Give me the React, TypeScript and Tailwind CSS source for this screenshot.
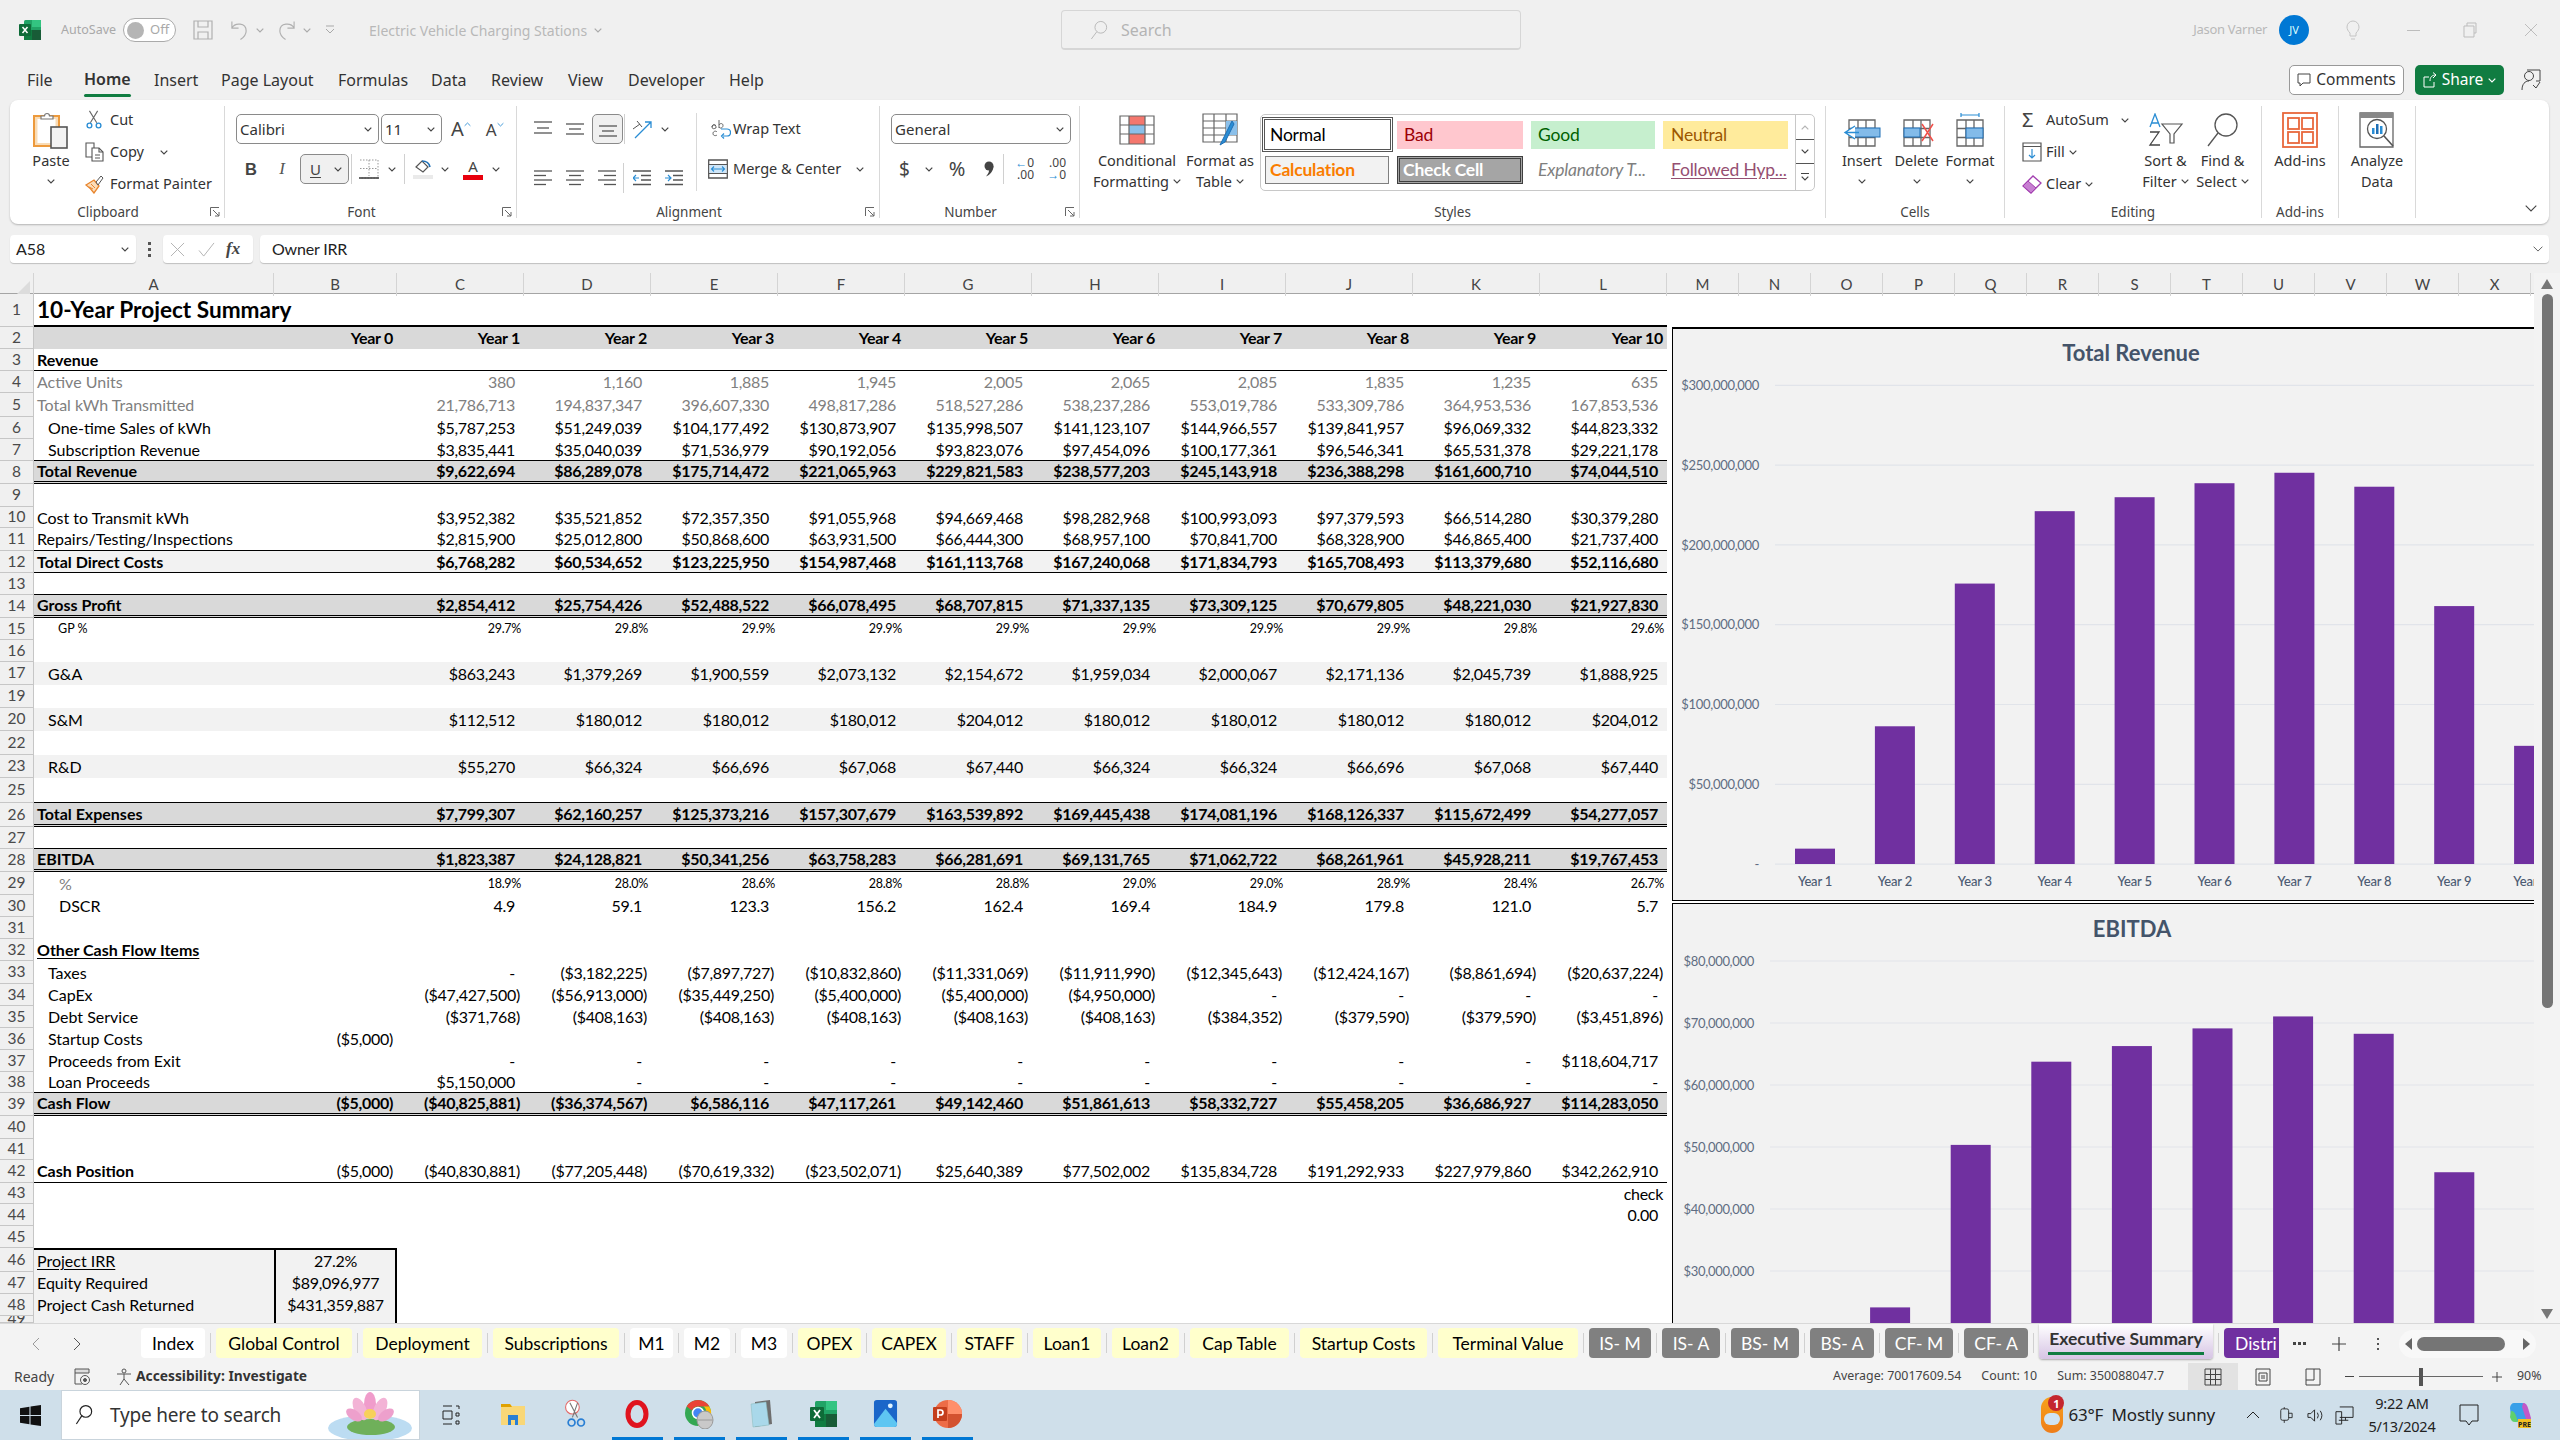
import type { ReactNode } from "react"

const chevron = (cls = "") => (
  <svg viewBox="0 0 8 5" className={`w-[8px] h-[5px] shrink-0 ${cls}`} fill="none" stroke="#444" strokeWidth="1.2">
    <path d="M.7.7 4 4 7.3.7" />
  </svg>
)

// ---- sheet data ----
type RowDef = { n: number; h: string; label?: string; pl?: string; vals?: string; cls?: string; txt?: string; lab?: string; small?: boolean; box?: boolean }

const ROWS: RowDef[] = [
  { n: 1, h: "h-[33px]", label: "10-Year Project Summary", lab: "font-bold text-[22.6px]", cls: "border-b-2 border-black" },
  { n: 2, h: "h-[22px]", vals: "Year_0 Year_1 Year_2 Year_3 Year_4 Year_5 Year_6 Year_7 Year_8 Year_9 Year_10", cls: "bg-[#d9d9d9] font-bold" },
  { n: 3, h: "h-[22px]", label: "Revenue", lab: "font-bold", cls: "border-b border-black" },
  { n: 4, h: "h-[22px]", label: "Active Units", vals: "_ 380 1,160 1,885 1,945 2,005 2,065 2,085 1,835 1,235 635", txt: "text-[#808080]" },
  { n: 5, h: "h-[24px]", label: "Total kWh Transmitted", vals: "_ 21,786,713 194,837,347 396,607,330 498,817,286 518,527,286 538,237,286 553,019,786 533,309,786 364,953,536 167,853,536", txt: "text-[#808080]" },
  { n: 6, h: "h-[22px]", label: "One-time Sales of kWh", pl: "pl-[14px]", vals: "_ $5,787,253 $51,249,039 $104,177,492 $130,873,907 $135,998,507 $141,123,107 $144,966,557 $139,841,957 $96,069,332 $44,823,332" },
  { n: 7, h: "h-[22px]", label: "Subscription Revenue", pl: "pl-[14px]", vals: "_ $3,835,441 $35,040,039 $71,536,979 $90,192,056 $93,823,076 $97,454,096 $100,177,361 $96,546,341 $65,531,378 $29,221,178", cls: "border-b border-black" },
  { n: 8, h: "h-[23px]", label: "Total Revenue", vals: "_ $9,622,694 $86,289,078 $175,714,472 $221,065,963 $229,821,583 $238,577,203 $245,143,918 $236,388,298 $161,600,710 $74,044,510", cls: "bg-[#d9d9d9] font-bold border-b-[3px] border-double border-black" },
  { n: 9, h: "h-[23px]" },
  { n: 10, h: "h-[21px]", label: "Cost to Transmit kWh", vals: "_ $3,952,382 $35,521,852 $72,357,350 $91,055,968 $94,669,468 $98,282,968 $100,993,093 $97,379,593 $66,514,280 $30,379,280" },
  { n: 11, h: "h-[23px]", label: "Repairs/Testing/Inspections", vals: "_ $2,815,900 $25,012,800 $50,868,600 $63,931,500 $66,444,300 $68,957,100 $70,841,700 $68,328,900 $46,865,400 $21,737,400", cls: "border-b border-black" },
  { n: 12, h: "h-[22px]", label: "Total Direct Costs", vals: "_ $6,768,282 $60,534,652 $123,225,950 $154,987,468 $161,113,768 $167,240,068 $171,834,793 $165,708,493 $113,379,680 $52,116,680", cls: "bg-[#f2f2f2] font-bold border-b border-black" },
  { n: 13, h: "h-[22px]", cls: "border-b border-black" },
  { n: 14, h: "h-[23px]", label: "Gross Profit", vals: "_ $2,854,412 $25,754,426 $52,488,522 $66,078,495 $68,707,815 $71,337,135 $73,309,125 $70,679,805 $48,221,030 $21,927,830", cls: "bg-[#d9d9d9] font-bold border-b-[3px] border-double border-black" },
  { n: 15, h: "h-[22px]", label: "GP %", pl: "pl-[24px]", lab: "text-[12.5px]", small: true, vals: "_ 29.7% 29.8% 29.9% 29.9% 29.9% 29.9% 29.9% 29.9% 29.8% 29.6%" },
  { n: 16, h: "h-[22px]" },
  { n: 17, h: "h-[23px]", label: "G&A", pl: "pl-[14px]", vals: "_ $863,243 $1,379,269 $1,900,559 $2,073,132 $2,154,672 $1,959,034 $2,000,067 $2,171,136 $2,045,739 $1,888,925", cls: "bg-[#f2f2f2]" },
  { n: 19, h: "h-[23px]" },
  { n: 20, h: "h-[23px]", label: "S&M", pl: "pl-[14px]", vals: "_ $112,512 $180,012 $180,012 $180,012 $204,012 $180,012 $180,012 $180,012 $180,012 $204,012", cls: "bg-[#f2f2f2]" },
  { n: 22, h: "h-[24px]" },
  { n: 23, h: "h-[23px]", label: "R&D", pl: "pl-[14px]", vals: "_ $55,270 $66,324 $66,696 $67,068 $67,440 $66,324 $66,324 $66,696 $67,068 $67,440", cls: "bg-[#f2f2f2]" },
  { n: 25, h: "h-[25px]", cls: "border-b border-black" },
  { n: 26, h: "h-[24px]", label: "Total Expenses", vals: "_ $7,799,307 $62,160,257 $125,373,216 $157,307,679 $163,539,892 $169,445,438 $174,081,196 $168,126,337 $115,672,499 $54,277,057", cls: "bg-[#d9d9d9] font-bold border-b-[3px] border-double border-black" },
  { n: 27, h: "h-[22px]", cls: "border-b border-black" },
  { n: 28, h: "h-[23px]", label: "EBITDA", vals: "_ $1,823,387 $24,128,821 $50,341,256 $63,758,283 $66,281,691 $69,131,765 $71,062,722 $68,261,961 $45,928,211 $19,767,453", cls: "bg-[#d9d9d9] font-bold border-b-[3px] border-double border-black" },
  { n: 29, h: "h-[23px]", label: "%", pl: "pl-[25px]", lab: "text-[#808080]", small: true, vals: "_ 18.9% 28.0% 28.6% 28.8% 28.8% 29.0% 29.0% 28.9% 28.4% 26.7%" },
  { n: 30, h: "h-[22px]", label: "DSCR", pl: "pl-[25px]", vals: "_ 4.9 59.1 123.3 156.2 162.4 169.4 184.9 179.8 121.0 5.7" },
  { n: 31, h: "h-[22px]" },
  { n: 32, h: "h-[22px]", label: "Other Cash Flow Items", lab: "font-bold underline underline-offset-2" },
  { n: 33, h: "h-[23px]", label: "Taxes", pl: "pl-[14px]", vals: "_ - ($3,182,225) ($7,897,727) ($10,832,860) ($11,331,069) ($11,911,990) ($12,345,643) ($12,424,167) ($8,861,694) ($20,637,224)" },
  { n: 34, h: "h-[22px]", label: "CapEx", pl: "pl-[14px]", vals: "_ ($47,427,500) ($56,913,000) ($35,449,250) ($5,400,000) ($5,400,000) ($4,950,000) - - - -" },
  { n: 35, h: "h-[22px]", label: "Debt Service", pl: "pl-[14px]", vals: "_ ($371,768) ($408,163) ($408,163) ($408,163) ($408,163) ($408,163) ($384,352) ($379,590) ($379,590) ($3,451,896)" },
  { n: 36, h: "h-[22px]", label: "Startup Costs", pl: "pl-[14px]", vals: "($5,000)" },
  { n: 37, h: "h-[22px]", label: "Proceeds from Exit", pl: "pl-[14px]", vals: "_ - - - - - - - - - $118,604,717" },
  { n: 38, h: "h-[21px]", label: "Loan Proceeds", pl: "pl-[14px]", vals: "_ $5,150,000 - - - - - - - - -", cls: "border-b border-black" },
  { n: 39, h: "h-[23px]", label: "Cash Flow", vals: "($5,000) ($40,825,881) ($36,374,567) $6,586,116 $47,117,261 $49,142,460 $51,861,613 $58,332,727 $55,458,205 $36,686,927 $114,283,050", cls: "bg-[#d9d9d9] font-bold border-b-[3px] border-double border-black" },
  { n: 40, h: "h-[23px]" },
  { n: 41, h: "h-[21px]" },
  { n: 42, h: "h-[23px]", label: "Cash Position", lab: "font-bold", vals: "($5,000) ($40,830,881) ($77,205,448) ($70,619,332) ($23,502,071) $25,640,389 $77,502,002 $135,834,728 $191,292,933 $227,979,860 $342,262,910", cls: "border-b border-black" },
  { n: 43, h: "h-[21px]", vals: "_ _ _ _ _ _ _ _ _ _ check" },
  { n: 44, h: "h-[22px]", vals: "_ _ _ _ _ _ _ _ _ _ 0.00" },
  { n: 45, h: "h-[22px]" },
  { n: 46, h: "h-[24px]", label: "Project IRR", lab: "underline underline-offset-2", vals: "27.2%", box: true },
  { n: 47, h: "h-[22px]", label: "Equity Required", vals: "$89,096,977", box: true },
  { n: 48, h: "h-[22px]", label: "Project Cash Returned", vals: "$431,359,887", box: true },
  { n: 49, h: "h-[7px]", box: true },
]

const COLS = ["A", "B", "C", "D", "E", "F", "G", "H", "I", "J", "K", "L", "M", "N", "O", "P", "Q", "R", "S", "T", "U", "V", "W", "X"]

function SheetRow({ r }: { r: RowDef }) {
  const vals = r.vals ? r.vals.split(" ") : []
  return (
    <div className={`flex ${r.h} overflow-hidden`}>
      <div className="w-[34px] shrink-0 bg-[#f0f0f0] border-r border-b border-[#c6c6c6] flex items-center justify-center text-[15.5px] leading-none text-[#4a4a4a]">{r.n}</div>
      <div className={`box-border grid grid-cols-[240px_123px_repeat(10,127px)] w-[1633px] h-full items-center text-[16px] leading-[18px] tracking-[-0.3px] ${r.cls ?? ""} ${r.txt ?? "text-black"}`}>
        <div className={`h-full flex items-center whitespace-nowrap tracking-normal ${r.pl ?? "pl-[3px]"} ${r.lab ?? ""} ${r.box ? "bg-[#f2f2f2]" : ""} ${r.n === 46 ? "border-t-2 border-black" : ""}`}>{r.label}</div>
        {r.box ? (
          <div className={`h-full bg-[#f2f2f2] border-x-2 border-black flex items-center justify-center ${r.n === 46 ? "border-t-2" : ""}`}>{vals[0]}</div>
        ) : (
          vals.map((v, i) => (
            <div
              key={i}
              className={`text-right whitespace-nowrap ${v.startsWith("(") || v.startsWith("Year") || v === "check" ? "pr-[4px]" : v.endsWith("%") ? "pr-[3px]" : "pr-[9px]"} ${r.small ? "text-[12.5px]" : ""}`}
            >
              {v.startsWith("_") ? "" : v.replace("_", " ")}
            </div>
          ))
        )}
      </div>
    </div>
  )
}

// ---- charts ----
const REV = [9.62, 86.29, 175.71, 221.07, 229.82, 238.58, 245.14, 236.39, 161.6, 74.04]
const EBITDA = [1.82, 24.13, 50.34, 63.76, 66.28, 69.13, 71.06, 68.26, 45.93, 19.77]

function RevenueChart() {
  const ticks = ["$300,000,000", "$250,000,000", "$200,000,000", "$150,000,000", "$100,000,000", "$50,000,000", "-"]
  return (
    <svg viewBox="0 0 861 571" className="w-[861px] h-[571px] block">
      <text x="458" y="32" textAnchor="middle" fontSize="22" fontWeight="700" fill="#44546a">Total Revenue</text>
      {ticks.map((t, i) => (
        <g key={t}>
          <line x1="102" x2="861" y1={56.3 + i * 79.8} y2={56.3 + i * 79.8} stroke="#e1e4ea" strokeWidth="1.2" />
          <text x="86" y={61 + i * 79.8} textAnchor="end" fontSize="13" letterSpacing="-0.3" fill="#5f6d82">{t}</text>
        </g>
      ))}
      {REV.map((v, i) => (
        <g key={i}>
          <rect x={122 + i * 79.9} y={535 - v * 1.596} width="40" height={v * 1.596} fill="#7030a0" />
          <text x={142 + i * 79.9} y="557" textAnchor="middle" fontSize="13" fontWeight="500" letterSpacing="-0.2" fill="#4c5b72">Year {i + 1}</text>
        </g>
      ))}
    </svg>
  )
}

function EbitdaChart() {
  const ticks = ["$80,000,000", "$70,000,000", "$60,000,000", "$50,000,000", "$40,000,000", "$30,000,000"]
  return (
    <svg viewBox="0 0 861 419" className="w-[861px] h-[419px] block">
      <text x="459" y="33" textAnchor="middle" fontSize="22" fontWeight="700" fill="#44546a">EBITDA</text>
      {ticks.map((t, i) => (
        <g key={t}>
          <line x1="97" x2="861" y1={57 + i * 62} y2={57 + i * 62} stroke="#e1e4ea" strokeWidth="1.2" />
          <text x="81" y={62 + i * 62} textAnchor="end" fontSize="13" letterSpacing="-0.3" fill="#5f6d82">{t}</text>
        </g>
      ))}
      {EBITDA.map((v, i) => (
        <rect key={i} x={116.5 + i * 80.6} y={57 + (80 - v) * 6.2} width="40" height={v * 6.2} fill="#7030a0" />
      ))}
    </svg>
  )
}

// ---- ribbon icons ----
function LineIcon({ lines }: { lines: number[][] }) {
  return (
    <svg viewBox="0 0 18 18" className="w-[18px] h-[18px]" stroke="#555" strokeWidth="1.3">
      {lines.map(([x1, x2, y], i) => (
        <line key={i} x1={x1} x2={x2} y1={y} y2={y} />
      ))}
    </svg>
  )
}

const ClipboardIcon = (
  <svg viewBox="0 0 36 38" className="w-[36px] h-[38px]">
    <rect x="1" y="5" width="25" height="30" fill="#f9dcb6" stroke="#ed9a3c" strokeWidth="2" />
    <rect x="4.5" y="8" width="18" height="24" fill="#fff" />
    <path d="M8 8V5h3.5a2.5 2.5 0 0 1 5 0H20v3z" fill="#fff" stroke="#777" strokeWidth="1.2" />
    <rect x="18" y="16" width="16" height="21" fill="#f3f3f3" stroke="#555" strokeWidth="1.6" />
  </svg>
)
const ScissorsIcon = (
  <svg viewBox="0 0 18 22" className="w-[18px] h-[20px]" fill="none">
    <path d="M4 1 12 14M13 1 5 14" stroke="#666" strokeWidth="1.2" />
    <circle cx="4" cy="17" r="2.6" stroke="#2a8dd4" strokeWidth="1.5" />
    <circle cx="14" cy="17" r="2.6" stroke="#2a8dd4" strokeWidth="1.5" />
  </svg>
)
const CopyIcon = (
  <svg viewBox="0 0 20 20" className="w-[20px] h-[20px]" fill="#fff" stroke="#555" strokeWidth="1.1">
    <path d="M1 1h8v14H1z" />
    <path d="M7 6h7l4 4v9H7z" />
    <path d="M14 6v4h4M10 13h5M10 16h5" fill="none" />
  </svg>
)
const PainterIcon = (
  <svg viewBox="0 0 20 20" className="w-[20px] h-[20px]" fill="none">
    <path d="M1 11 9 6l5 6-5 7C6 15 4 13 1 11z" fill="#fbdcb8" stroke="#e8842c" strokeWidth="1.3" />
    <path d="M4 13l4 2M6 10l4 4" stroke="#e8842c" />
    <path d="m11 8 5-6 2 2-5 7z" fill="#fff" stroke="#555" />
  </svg>
)

function CellsIcon({ kind }: { kind: "insert" | "delete" | "format" }) {
  return (
    <svg viewBox="0 0 38 34" className="w-[38px] h-[34px]" fill="none">
      {kind === "format" && <path d="M10 2h18M10 0v4M28 0v4" stroke="#2a8dd4" strokeWidth="1.2" />}
      <path d="M6 7h26v26H6zM6 15.500h26M6 24.500h26M15 7v26M23 7v26" stroke="#666" strokeWidth="1.3" />
      {kind === "insert" && (
        <>
          <rect x="10" y="15" width="27" height="9" fill="#83bbe9" stroke="#1f6fb5" />
          <path d="M12 13 2 19.500l10 6.500M2 19.500h14" stroke="#2a8dd4" strokeWidth="1.4" fill="#fff" />
        </>
      )}
      {kind === "delete" && (
        <>
          <rect x="6" y="15" width="16" height="9" fill="#83bbe9" stroke="#1f6fb5" />
          <path d="M24 11l11 17M35 11 24 28" stroke="#f0504a" strokeWidth="1.5" />
        </>
      )}
      {kind === "format" && <rect x="15" y="15" width="17" height="10" fill="#83bbe9" stroke="#1f6fb5" />}
    </svg>
  )
}

// a big ribbon button: icon on top, one or two lines of text, chevron
function BigBtn({ icon, lines, chev = true, w, lastChev = false }: { icon: ReactNode; lines: string[]; chev?: boolean; w: string; lastChev?: boolean }) {
  return (
    <div className={`${w} shrink-0 flex flex-col items-center`}>
      <div className="h-[40px] flex items-center justify-center">{icon}</div>
      {lines.map((l, i) => (
        <div key={l} className="h-[21px] leading-[21px] flex items-center gap-[4px] whitespace-nowrap">
          {l}
          {lastChev && i === lines.length - 1 && chevron()}
        </div>
      ))}
      {chev && !lastChev && <div className="h-[21px] flex items-center">{chevron()}</div>}
    </div>
  )
}

function Group({ w, label, launcher = true, children }: { w: string; label: string; launcher?: boolean; children: ReactNode }) {
  return (
    <div className={`${w} shrink-0 box-border h-[112px] my-[6px] border-r border-[#d9d9d9] flex flex-col justify-between`}>
      <div className="h-[92px]">{children}</div>
      <div className="flex items-center h-[20px] -mb-[4px] text-[13.5px] text-[#444]">
        <span className="flex-1 text-center">{label}</span>
        {launcher && (
          <svg viewBox="0 0 10 10" className="w-[10px] h-[10px] mr-[4px] ml-[4px]" fill="none" stroke="#666">
            <path d="M.5 9V.5H9M3 3l6 6M5 9h4V5" />
          </svg>
        )}
      </div>
    </div>
  )
}

const Sep = ({ h = "h-[30px]" }: { h?: string }) => <div className={`w-px ${h} bg-[#d0d0d0] shrink-0`} />

function Ribbon() {
  return (
    <div className="mx-[10px] h-[124px] w-[2539px] bg-white rounded-[8px] shadow-[0_1px_2px_rgba(0,0,0,0.25)] flex text-[14.5px] text-[#333] [font-family:'Noto_Sans',sans-serif]">
      <Group w="w-[215px]" label="Clipboard">
        <div className="flex pt-[4px] pl-[15px]">
          <BigBtn w="w-[52px]" icon={ClipboardIcon} lines={["Paste"]} />
          <div className="pl-[8px] -mt-[6px] flex flex-col">
            <div className="h-[32px] flex items-center"><span className="w-[25px]">{ScissorsIcon}</span>Cut</div>
            <div className="h-[32px] flex items-center"><span className="w-[25px]">{CopyIcon}</span>Copy<span className="ml-[16px]">{chevron()}</span></div>
            <div className="h-[32px] flex items-center"><span className="w-[25px]">{PainterIcon}</span>Format Painter</div>
          </div>
        </div>
      </Group>

      <Group w="w-[292px]" label="Font">
        <div className="pt-[8px] pl-[11px]">
          <div className="flex items-center h-[30px]">
            <div className="w-[143px] h-[30px] border border-[#8a8a8a] rounded-[5px] flex items-center justify-between px-[3px] pr-[6px] text-[15px]">Calibri{chevron()}</div>
            <div className="ml-[2px] w-[61px] h-[30px] border border-[#8a8a8a] rounded-[5px] flex items-center justify-between px-[3px] pr-[6px] text-[15px]">11{chevron()}</div>
            <span className="ml-[9px] text-[20px] text-[#444] leading-none">A</span>
            <svg viewBox="0 0 8 5" className="w-[7px] h-[5px] mb-[10px]" fill="none" stroke="#2a8dd4"><path d="M.7 4 4 .8 7.300 4" /></svg>
            <span className="ml-[15px] text-[17px] text-[#444] leading-none">A</span>
            <svg viewBox="0 0 8 5" className="w-[7px] h-[5px] mb-[10px]" fill="none" stroke="#2a8dd4"><path d="M.7 1 4 4.200 7.300 1" /></svg>
          </div>
          <div className="flex items-center h-[30px] mt-[10px]">
            <span className="w-[30px] text-center font-bold text-[16.5px] [font-family:'Liberation_Sans',sans-serif] text-[#444]">B</span>
            <span className="w-[32px] text-center italic text-[17px] [font-family:'Liberation_Serif',serif] text-[#555]">I</span>
            <div className="ml-[2px] w-[49px] h-[30px] rounded-[5px] border border-[#8a8a8a] bg-[#f0f0f0] flex items-center justify-between pl-[9px] pr-[6px]">
              <span className="text-[15px] underline underline-offset-2 text-[#444]">U</span>
              {chevron()}
            </div>
            <div className="ml-[2px]"><Sep /></div>
            <svg viewBox="0 0 20 20" className="w-[20px] h-[20px] ml-[7px]" fill="none">
              <path d="M1 1h18v18H1" stroke="#999" strokeDasharray="1.500 1.500" />
              <path d="M10 1v16M1 9.500h18" stroke="#999" strokeDasharray="1.500 1.500" />
              <path d="M0 19h20" stroke="#444" strokeWidth="1.600" />
            </svg>
            <span className="ml-[9px]">{chevron()}</span>
            <div className="ml-[8px]"><Sep /></div>
            <div className="ml-[8px] flex flex-col items-center w-[20px]">
              <svg viewBox="0 0 20 15" className="w-[20px] h-[15px]" fill="none">
                <path d="M3 8 9 2l6 6-5 5z" fill="#fff" stroke="#555" strokeWidth="1.200" />
                <path d="M9 2c4 0 7 1 8 6" stroke="#1f6fb5" strokeWidth="1.600" />
              </svg>
              <div className="w-[20px] h-[4px] bg-[#eaeaea] mt-[1px]" />
            </div>
            <span className="ml-[8px]">{chevron()}</span>
            <div className="ml-[14px] flex flex-col items-center w-[20px]">
              <span className="text-[15px] leading-[17px] text-[#444]">A</span>
              <div className="w-[20px] h-[5px] bg-[#e8000d]" />
            </div>
            <span className="ml-[9px]">{chevron()}</span>
          </div>
        </div>
      </Group>

      <Group w="w-[363px]" label="Alignment">
        <div className="flex h-full">
          <div className="w-[180px] box-border border-r border-[#d9d9d9] h-[78px] mt-[7px] pl-[10px] flex flex-col justify-between">
            <div className="flex items-center h-[30px] mt-[1px]">
              <span className="w-[32px] flex justify-center"><LineIcon lines={[[0, 18, 2], [3, 15, 8], [0, 18, 13]]} /></span>
              <span className="w-[32px] flex justify-center"><LineIcon lines={[[0, 18, 4], [3, 15, 9], [0, 18, 14]]} /></span>
              <span className="ml-[1px] w-[31px] h-[30px] bg-[#f0f0f0] border border-[#8a8a8a] rounded-[5px] flex items-center justify-center"><LineIcon lines={[[0, 18, 6], [3, 15, 11], [0, 18, 16]]} /></span>
              <span className="ml-[1px]"><Sep /></span>
              <svg viewBox="0 0 22 20" className="w-[22px] h-[20px] ml-[7px]" fill="none">
                <path d="M3 19 19 3M13 3h6v6" stroke="#2a8dd4" strokeWidth="1.300" />
                <path d="M1 10l7-5M5 2l5 6" stroke="#555" />
              </svg>
              <span className="ml-[7px]">{chevron()}</span>
            </div>
            <div className="flex items-center h-[30px] mb-[-2px]">
              <span className="w-[32px] flex justify-center"><LineIcon lines={[[0, 18, 2], [0, 12, 6.500], [0, 18, 11], [0, 12, 15.500]]} /></span>
              <span className="w-[32px] flex justify-center"><LineIcon lines={[[0, 18, 2], [3, 15, 6.500], [0, 18, 11], [3, 15, 15.500]]} /></span>
              <span className="w-[32px] flex justify-center"><LineIcon lines={[[0, 18, 2], [6, 18, 6.500], [0, 18, 11], [6, 18, 15.500]]} /></span>
              <Sep />
              <svg viewBox="0 0 18 18" className="w-[18px] h-[18px] ml-[9px]" fill="none">
                <path d="M0 2h18M8 6.500h10M8 11h10M0 15.500h18" stroke="#555" strokeWidth="1.300" />
                <path d="M6 9H0M3 6 0 9l3 3" stroke="#2a8dd4" strokeWidth="1.200" />
              </svg>
              <svg viewBox="0 0 18 18" className="w-[18px] h-[18px] ml-[14px]" fill="none">
                <path d="M0 2h18M8 6.500h10M8 11h10M0 15.500h18" stroke="#555" strokeWidth="1.300" />
                <path d="M0 9h6M3 6l3 3-3 3" stroke="#2a8dd4" strokeWidth="1.200" />
              </svg>
            </div>
          </div>
          <div className="pl-[14px] pt-[8px]">
            <div className="h-[30px] flex items-center gap-[2px]">
              <svg viewBox="0 0 20 20" className="w-[20px] h-[20px]" fill="none">
                <path d="M1 8c0-3 4-3 4 0v1M5 6.500C3.500 5.500 1 5.800 1 8s2.500 2 4 .8M8 1v8M8 6c1-2 4-2 4 .5S9 10 8 8M6 13c-1-1.500-4-1-4 1.500S5 17 6 16" stroke="#555" strokeWidth=".9" />
                <path d="M12 17h4a3.500 3.500 0 0 0 0-7h-6M13 14.500 10.500 17l2.500 2.500" stroke="#2a8dd4" strokeWidth="1.200" />
              </svg>
              Wrap Text
            </div>
            <div className="h-[30px] mt-[10px] flex items-center">
              <svg viewBox="0 0 20 20" className="w-[20px] h-[20px] -ml-[3px] mr-[5px]" fill="none">
                <path d="M.7 1h18.600v18H.7z" stroke="#555" strokeWidth="1.300" />
                <path d="M.7 5.500h18.600M.7 14.500h18.600" stroke="#555" />
                <rect x="1.500" y="6" width="17" height="8" fill="#cfe6f8" />
                <path d="M3 10h14M6 7.500 3.500 10 6 12.500M14 7.500l2.500 2.500-2.500 2.500" stroke="#2a8dd4" strokeWidth="1.100" />
              </svg>
              Merge &amp; Center
              <span className="ml-[15px]">{chevron()}</span>
            </div>
          </div>
        </div>
      </Group>

      <Group w="w-[200px]" label="Number">
        <div className="pt-[8px] pl-[11px]">
          <div className="w-[180px] h-[30px] border border-[#8a8a8a] rounded-[5px] flex items-center justify-between px-[3px] pr-[6px] text-[15px]">General{chevron()}</div>
          <div className="flex items-center h-[30px] mt-[10px]">
            <span className="w-[27px] text-center text-[19px] text-[#444]">$</span>
            <span className="ml-[7px]">{chevron()}</span>
            <span className="ml-[10px] w-[28px] text-center text-[20px] text-[#444]">%</span>
            <span className="ml-[4px] w-[28px] flex justify-center">
              <svg viewBox="0 0 10 16" className="w-[10px] h-[16px]" fill="#444">
                <circle cx="5" cy="5" r="4.500" />
                <path d="M9.500 5C9.500 10 6 14 2 15.500 4.500 12.500 5.500 10 5 8z" />
              </svg>
            </span>
            <Sep />
            <div className="ml-[6px] w-[24px] text-[12px] leading-[12px] text-[#444]">
              <div className="flex items-center justify-end"><span className="text-[#2a8dd4]">←</span>0</div>
              <div className="text-right">.00</div>
            </div>
            <div className="ml-[8px] w-[24px] text-[12px] leading-[12px] text-[#444]">
              <div className="text-right">.00</div>
              <div className="flex items-center justify-end"><span className="text-[#2a8dd4]">→</span>0</div>
            </div>
          </div>
        </div>
      </Group>

      <Group w="w-[746px]" label="Styles" launcher={false}>
        <div className="flex pt-[4px]">
          <BigBtn
            w="w-[88px] ml-[13px]"
            chev={false}
            lastChev
            icon={
              <svg viewBox="0 0 36 30" className="w-[36px] h-[30px]" fill="none">
                <rect x="10" y="1" width="16" height="9" fill="#f4776e" />
                <rect x="10" y="19" width="16" height="10" fill="#f4776e" />
                <rect x="10" y="10" width="16" height="9" fill="#8bc0ea" />
                <path d="M1 1h34v28H1zM1 10h34M1 19h34M10 1v28M26 1v28" stroke="#666" strokeWidth="1.200" />
              </svg>
            }
            lines={["Conditional", "Formatting"]}
          />
          <BigBtn
            w="w-[72px] ml-[3px]"
            chev={false}
            lastChev
            icon={
              <svg viewBox="0 0 36 34" className="w-[36px] h-[34px]" fill="none">
                <path d="M1 1h34v28H1zM1 8h34M1 15h34M1 22h34M12 1v28M24 1v28" stroke="#666" strokeWidth="1.200" />
                <path d="M24 8h11v14H24z" fill="#8bc0ea" />
                <path d="M30 8 21 26l-3 6 5-3 9-18z" fill="#2a8dd4" stroke="#1f6fb5" />
              </svg>
            }
            lines={["Format as", "Table"]}
          />
          <div className="ml-[4px] w-[555px] h-[77px] mt-[4px] border border-[#c8c8c8] rounded-[5px] flex text-[17.5px] leading-[20px] tracking-[-0.2px] [font-family:Lato,sans-serif]">
            <div className="flex-1 grid grid-cols-[135px_134px_132px_125px] grid-rows-[41px_1fr] pl-px">
              <div className="mt-[2px] w-[131px] h-[35px] border-[3px] border-double border-[#555] flex items-center pl-[5px] text-black">Normal</div>
              <div className="mt-[6px] w-[126px] h-[28px] bg-[#ffc7ce] text-[#9c0006] flex items-center pl-[7px]">Bad</div>
              <div className="mt-[6px] w-[124px] h-[28px] bg-[#c6efce] text-[#006100] flex items-center pl-[7px]">Good</div>
              <div className="mt-[6px] w-[125px] h-[28px] bg-[#ffeb9c] text-[#9c5700] flex items-center pl-[8px]">Neutral</div>
              <div className="ml-[3px] w-[124px] h-[28px] bg-[#f2f2f2] border border-[#7f7f7f] text-[#fa7d00] font-bold flex items-center pl-[4px]">Calculation</div>
              <div className="w-[126px] h-[28px] bg-[#a5a5a5] border-[3px] border-double border-[#3f3f3f] text-white font-bold flex items-center pl-[3px]">Check Cell</div>
              <div className="h-[28px] italic text-[#7f7f7f] flex items-center pl-[7px] whitespace-nowrap">Explanatory T...</div>
              <div className="h-[28px] flex items-center pl-[8px] text-[#954f72] underline underline-offset-2 whitespace-nowrap">Followed Hyp...</div>
            </div>
            <div className="w-[19px] flex flex-col border-l border-[#c8c8c8] items-center">
              <div className="h-[24px] flex items-center">{chevron("rotate-180 opacity-40")}</div>
              <div className="h-[25px] w-full border-y border-[#555] flex items-center justify-center">{chevron()}</div>
              <div className="flex-1 flex flex-col items-center justify-center gap-[2px]"><div className="w-[8px] h-px bg-[#444]" />{chevron()}</div>
            </div>
          </div>
        </div>
      </Group>

      <Group w="w-[179px]" label="Cells" launcher={false}>
        <div className="flex pt-[4px] pl-[9px]">
          <BigBtn w="w-[54px]" icon={<CellsIcon kind="insert" />} lines={["Insert"]} />
          <BigBtn w="w-[55px]" icon={<CellsIcon kind="delete" />} lines={["Delete"]} />
          <BigBtn w="w-[52px]" icon={<CellsIcon kind="format" />} lines={["Format"]} />
        </div>
      </Group>

      <Group w="w-[257px]" label="Editing" launcher={false}>
        <div className="flex">
          <div className="w-[132px] shrink-0 pl-[17px] -mt-[2px] flex flex-col">
            <div className="h-[32px] flex items-center">
              <span className="w-[24px] text-[20px] text-[#444] leading-none">Σ</span>AutoSum<span className="ml-[12px]">{chevron()}</span>
            </div>
            <div className="h-[32px] flex items-center">
              <span className="w-[24px]">
                <svg viewBox="0 0 20 20" className="w-[20px] h-[20px]" fill="none">
                  <path d="M1 1h18v18H1zM1 4.500h18" stroke="#555" strokeWidth="1.200" />
                  <path d="M10 7v9M7 13l3 3 3-3" stroke="#2a8dd4" strokeWidth="1.200" />
                </svg>
              </span>
              Fill<span className="ml-[4px]">{chevron()}</span>
            </div>
            <div className="h-[32px] flex items-center">
              <span className="w-[24px]">
                <svg viewBox="0 0 20 20" className="w-[20px] h-[20px]" fill="none">
                  <path d="M1 12 11 2l8 7-10 10z" fill="#fff" stroke="#a33fb0" strokeWidth="1.300" />
                  <path d="M1 12l5-5 8 7-5 5z" fill="#c77fd2" stroke="#a33fb0" />
                </svg>
              </span>
              Clear<span className="ml-[4px]">{chevron()}</span>
            </div>
          </div>
          <div className="flex pt-[4px]">
            <BigBtn
              w="w-[57px]"
              chev={false}
              lastChev
              icon={
                <svg viewBox="0 0 36 34" className="w-[36px] h-[34px]" fill="none">
                  <path d="M2 14 7 1l5 13M4 10h6" stroke="#2a8dd4" strokeWidth="1.300" />
                  <path d="M2 19h9L2 32h10" stroke="#444" strokeWidth="1.300" />
                  <path d="M14 11h20l-8 10v9h-4v-9z" stroke="#555" strokeWidth="1.200" />
                </svg>
              }
              lines={["Sort &", "Filter"]}
            />
            <BigBtn
              w="w-[57px]"
              chev={false}
              lastChev
              icon={
                <svg viewBox="0 0 34 36" className="w-[34px] h-[36px]" fill="none">
                  <circle cx="20" cy="13" r="11" stroke="#555" strokeWidth="1.300" />
                  <path d="M12 21 2 34" stroke="#555" strokeWidth="1.300" />
                </svg>
              }
              lines={["Find &", "Select"]}
            />
          </div>
        </div>
      </Group>

      <Group w="w-[77px]" label="Add-ins" launcher={false}>
        <div className="flex pt-[4px] justify-center">
          <BigBtn
            w="w-[70px]"
            chev={false}
            icon={
              <svg viewBox="0 0 36 36" className="w-[36px] h-[36px]" fill="none" stroke="#e8683c" strokeWidth="1.800">
                <rect x="1" y="1" width="34" height="34" />
                <rect x="6" y="6" width="11" height="11" />
                <rect x="20" y="6" width="11" height="11" />
                <rect x="6" y="20" width="11" height="11" />
                <rect x="20" y="20" width="11" height="11" />
              </svg>
            }
            lines={["Add-ins"]}
          />
        </div>
      </Group>

      <Group w="w-[77px]" label="" launcher={false}>
        <div className="flex pt-[4px] justify-center">
          <BigBtn
            w="w-[70px]"
            chev={false}
            icon={
              <svg viewBox="0 0 36 36" className="w-[36px] h-[36px]" fill="none">
                <path d="M1 1h33v34H1z" stroke="#666" strokeWidth="1.300" />
                <rect x="1" y="1" width="33" height="5" fill="#888" />
                <circle cx="18" cy="17" r="9.500" fill="#fff" stroke="#555" strokeWidth="1.300" />
                <rect x="13" y="16" width="2.500" height="6" fill="#2a8dd4" />
                <rect x="17" y="12" width="2.500" height="10" fill="#1f6fb5" />
                <rect x="21" y="14" width="2.500" height="8" fill="#2a8dd4" />
                <path d="m25 24 9 10" stroke="#555" strokeWidth="1.600" />
              </svg>
            }
            lines={["Analyze", "Data"]}
          />
        </div>
      </Group>

      <div className="flex-1 flex items-end justify-end pr-[12px] pb-[12px]">
        <svg viewBox="0 0 12 7" className="w-[12px] h-[7px]" fill="none" stroke="#444" strokeWidth="1.100"><path d="M.7.7 6 6l5.300-5.300" /></svg>
      </div>
    </div>
  )
}

// ---- tabs ----
const TABS: { label: string; w: string; c: string }[] = [
  { label: "Index", w: "w-[64px]", c: "bg-white text-black" },
  { label: "Global Control", w: "w-[136px]", c: "bg-[#ffffcc] text-black" },
  { label: "Deployment", w: "w-[119px]", c: "bg-[#ffffcc] text-black" },
  { label: "Subscriptions", w: "w-[126px]", c: "bg-[#ffffcc] text-black" },
  { label: "M1", w: "w-[43px]", c: "bg-white text-black" },
  { label: "M2", w: "w-[46px]", c: "bg-white text-black" },
  { label: "M3", w: "w-[46px]", c: "bg-white text-black" },
  { label: "OPEX", w: "w-[63px]", c: "bg-[#ffffcc] text-black" },
  { label: "CAPEX", w: "w-[74px]", c: "bg-[#ffffcc] text-black" },
  { label: "STAFF", w: "w-[65px]", c: "bg-[#ffffcc] text-black" },
  { label: "Loan1", w: "w-[68px]", c: "bg-[#ffffcc] text-black" },
  { label: "Loan2", w: "w-[67px]", c: "bg-[#ffffcc] text-black" },
  { label: "Cap Table", w: "w-[99px]", c: "bg-[#ffffcc] text-black" },
  { label: "Startup Costs", w: "w-[127px]", c: "bg-[#ffffcc] text-black" },
  { label: "Terminal Value", w: "w-[140px]", c: "bg-[#ffffcc] text-black" },
  { label: "IS- M", w: "w-[62px]", c: "bg-[#808080] text-white" },
  { label: "IS- A", w: "w-[58px]", c: "bg-[#808080] text-white" },
  { label: "BS- M", w: "w-[68px]", c: "bg-[#808080] text-white" },
  { label: "BS- A", w: "w-[64px]", c: "bg-[#808080] text-white" },
  { label: "CF- M", w: "w-[68px]", c: "bg-[#808080] text-white" },
  { label: "CF- A", w: "w-[64px]", c: "bg-[#808080] text-white" },
]

function TabBar() {
  return (
    <div className="h-[40px] bg-[#f3f3f3] border-t border-[#d8d8d8] flex items-start text-[17.5px] leading-[22px]">
      <div className="w-[141px] h-full shrink-0 flex items-center text-[#777]">
        <svg viewBox="0 0 8 14" className="w-[8px] h-[14px] ml-[32px]" fill="none" stroke="#999"><path d="M7 1 1 7l6 6" /></svg>
        <svg viewBox="0 0 8 14" className="w-[8px] h-[14px] ml-[33px]" fill="none" stroke="#555"><path d="m1 1 6 6-6 6" /></svg>
      </div>
      <div className="flex items-start pt-[4px]">
        {TABS.map((t) => (
          <div key={t.label} className="flex items-center">
            <div className={`${t.w} h-[30px] pt-[2px] rounded-[4px] flex items-center justify-center whitespace-nowrap ${t.c}`}>{t.label}</div>
            <div className="w-[11px] flex justify-center"><div className="w-px h-[20px] bg-[#d0d0d0]" /></div>
          </div>
        ))}
        <div className="w-[174px] h-[35px] -mt-[4px] rounded-b-[4px] bg-gradient-to-b from-white to-[#d6c4e4] shadow-[0_1px_2px_rgba(0,0,0,0.3)] flex flex-col items-center text-[#333] font-bold">
          <div className="h-[28px] pt-[2px] flex items-center whitespace-nowrap">Executive Summary</div>
          <div className="w-[156px] h-[3px] bg-[#107c41]" />
        </div>
        <div className="w-[11px] flex justify-center"><div className="w-px h-[20px] bg-[#d0d0d0] mt-[5px]" /></div>
        <div className="w-[55px] h-[30px] pt-[2px] rounded-l-[4px] bg-[#7030a0] text-white flex items-center pl-[11px] overflow-hidden">Distri</div>
      </div>
      <div className="flex items-center h-full text-[#444]">
        <div className="ml-[14px] flex gap-[2px]">
          <div className="w-[3px] h-[3px] bg-[#444]" /><div className="w-[3px] h-[3px] bg-[#444]" /><div className="w-[3px] h-[3px] bg-[#444]" />
        </div>
        <svg viewBox="0 0 14 14" className="w-[14px] h-[14px] ml-[26px]" stroke="#444" strokeWidth="1.200"><path d="M7 0v14M0 7h14" /></svg>
        <div className="ml-[31px] flex flex-col gap-[3px]">
          <div className="w-[2px] h-[2px] bg-[#555]" /><div className="w-[2px] h-[2px] bg-[#555]" /><div className="w-[2px] h-[2px] bg-[#555]" />
        </div>
        <div className="ml-[20px] w-[137px] h-[28px] bg-[#f8f8f8] rounded-full flex items-center px-[6px] gap-[5px]">
          <svg viewBox="0 0 7 12" className="w-[7px] h-[12px]" fill="#666"><path d="M7 0 0 6l7 6z" /></svg>
          <div className="w-[88px] h-[14px] rounded-full bg-[#757575]" />
          <div className="flex-1" />
          <svg viewBox="0 0 7 12" className="w-[7px] h-[12px]" fill="#666"><path d="m0 0 7 6-7 6z" /></svg>
        </div>
      </div>
    </div>
  )
}

function StatusBar() {
  return (
    <div className="h-[27px] bg-[#f3f3f3] flex items-center text-[12.4px] text-[#444] [font-family:'Noto_Sans',sans-serif]">
      <span className="ml-[14px] w-[60px] text-[14px]">Ready</span>
      <svg viewBox="0 0 18 18" className="w-[18px] h-[18px]" fill="none" stroke="#555">
        <path d="M1 1h14v4H1z" fill="#ddd" />
        <path d="M1 5v11h7" />
        <circle cx="11" cy="12" r="4.500" />
        <circle cx="11" cy="12" r="1.500" fill="#555" />
      </svg>
      <svg viewBox="0 0 18 18" className="w-[18px] h-[18px] ml-[23px]" fill="none" stroke="#555">
        <circle cx="9" cy="3" r="2" />
        <path d="M2 6h14M9 6v5M9 11l-4 6M9 11l5 6" />
      </svg>
      <span className="ml-[3px] font-bold text-[#333] text-[13.8px]">Accessibility: Investigate</span>
      <div className="ml-auto flex items-center h-full">
        <span>Average: 70017609.54</span>
        <span className="ml-[20px]">Count: 10</span>
        <span className="ml-[20px]">Sum: 350088047.7</span>
        <div className="ml-[24px] w-[50px] h-full bg-[#e2e2e2] flex items-center justify-center">
          <svg viewBox="0 0 18 18" className="w-[18px] h-[18px]" fill="none" stroke="#444">
            <path d="M1 1h16v16H1zM1 6.500h16M1 11.500h16M6.500 1v16M11.500 1v16" />
          </svg>
        </div>
        <svg viewBox="0 0 18 18" className="w-[18px] h-[18px] ml-[16px]" fill="none" stroke="#444">
          <path d="M2 1h14v16H2zM5 5h8v8H5zM7 8h4M7 10h4" />
        </svg>
        <svg viewBox="0 0 18 18" className="w-[18px] h-[18px] ml-[32px]" fill="none" stroke="#444">
          <path d="M2 1h14v16H2zM2 12h8V1" />
        </svg>
        <span className="ml-[23px] w-[9px] h-px bg-[#444]" />
        <div className="ml-[5px] w-[124px] h-px bg-[#666] flex items-center justify-center">
          <div className="w-[4px] h-[18px] bg-[#555]" />
        </div>
        <svg viewBox="0 0 10 10" className="w-[10px] h-[10px] ml-[9px]" stroke="#444"><path d="M5 0v10M0 5h10" /></svg>
        <span className="ml-[15px] w-[26px] mr-[17px]">90%</span>
      </div>
    </div>
  )
}

function TaskApp({ on = false, children }: { on?: boolean; children: ReactNode }) {
  return (
    <div className="w-[62px] h-full flex flex-col items-center">
      <div className="flex-1 flex items-center justify-center">{children}</div>
      <div className={`w-[51px] h-[3px] ${on ? "bg-[#0078d4]" : ""}`} />
    </div>
  )
}

function Taskbar() {
  return (
    <div className="h-[50px] bg-[#cfdfea] flex items-center text-black [font-family:'Noto_Sans',sans-serif]">
      <div className="w-[61px] flex justify-center">
        <svg viewBox="0 0 20 20" className="w-[21px] h-[21px]" fill="#111">
          <path d="M0 3 9 1.700V9.500H0zM10 1.500 20 0v9.500H10zM0 10.500h9v7.800L0 17zM10 10.500h10V20l-10-1.500z" />
        </svg>
      </div>
      <div className="w-[359px] h-full bg-white border border-[#c9d4dc] flex items-center overflow-hidden">
        <svg viewBox="0 0 20 24" className="w-[18px] h-[22px] ml-[13px]" fill="none" stroke="#222" strokeWidth="1.300">
          <circle cx="12" cy="8" r="6.500" />
          <path d="M7.500 13 1.500 22" />
        </svg>
        <span className="ml-[17px] text-[19px] text-[#333] tracking-[-0.2px]">Type here to search</span>
        <svg viewBox="0 0 86 50" className="w-[86px] h-[50px] ml-[46px] shrink-0">
          <ellipse cx="43" cy="38" rx="42" ry="13" fill="#bcdcf2" />
          <ellipse cx="44" cy="37" rx="24" ry="8" fill="#6fb05a" />
          <ellipse cx="43" cy="14" rx="6" ry="12" fill="#f09ccb" />
          <ellipse cx="33" cy="19" rx="6" ry="12" fill="#f3b3d6" transform="rotate(-25 33 19)" />
          <ellipse cx="53" cy="19" rx="6" ry="12" fill="#f3b3d6" transform="rotate(25 53 19)" />
          <ellipse cx="27" cy="25" rx="5" ry="9" fill="#eda0cc" transform="rotate(-55 27 25)" />
          <ellipse cx="59" cy="25" rx="5" ry="9" fill="#eda0cc" transform="rotate(55 59 25)" />
          <ellipse cx="43" cy="24" rx="6" ry="5" fill="#f7d15a" />
        </svg>
      </div>
      <div className="w-[62px] flex justify-center">
        <svg viewBox="0 0 18 20" className="w-[18px] h-[20px]" fill="none" stroke="#222">
          <path d="M1 1h9M1 19h9M1 6h9v8H1zM14 1h3v3M14 8h3v3h-3zM14 16h3v3h-3z" />
        </svg>
      </div>
      <TaskApp>
        <svg viewBox="0 0 26 26" className="w-[26px] h-[26px]">
          <path d="M1 3h9l2 2h13v19H1z" fill="#f9d777" />
          <path d="M1 3h9l2 3H1z" fill="#e0a100" />
          <path d="M8 14h10v10h-3v-5h-4v5H8z" fill="#2a7fd4" />
        </svg>
      </TaskApp>
      <TaskApp>
        <svg viewBox="0 0 28 34" className="w-[24px] h-[30px]" fill="none">
          <circle cx="11" cy="9" r="8" fill="#fff" stroke="#e36a6a" strokeWidth="1.300" />
          <path d="M8 4l9 17M17 4 11 21" stroke="#777" strokeWidth="1.300" />
          <circle cx="10" cy="27" r="4" stroke="#2a7fd4" strokeWidth="2" />
          <circle cx="21" cy="27" r="4" stroke="#2a7fd4" strokeWidth="2" />
        </svg>
      </TaskApp>
      <TaskApp on>
        <svg viewBox="0 0 28 28" className="w-[28px] h-[28px]" fill="none">
          <ellipse cx="14" cy="14" rx="9" ry="11.500" stroke="#e0131e" strokeWidth="5" />
        </svg>
      </TaskApp>
      <TaskApp on>
        <svg viewBox="0 0 30 30" className="w-[30px] h-[30px]">
          <circle cx="14" cy="14" r="13" fill="#34a853" />
          <path d="M14 1a13 13 0 0 1 11.300 6.500H14a6.500 6.500 0 0 0-6 4L2.700 7.500A13 13 0 0 1 14 1z" fill="#ea4335" />
          <path d="M25.300 7.500A13 13 0 0 1 14 27l5-8.500a6.500 6.500 0 0 0 .5-11z" fill="#fbbc05" />
          <circle cx="14" cy="14" r="5.500" fill="#4285f4" stroke="#fff" strokeWidth="1.500" />
          <ellipse cx="21" cy="21" rx="8" ry="9" fill="#c9c9c9" stroke="#9a9a9a" />
          <path d="M13.500 21h15" stroke="#9a9a9a" />
        </svg>
      </TaskApp>
      <TaskApp on>
        <svg viewBox="0 0 24 30" className="w-[24px] h-[30px]">
          <path d="M6 3 21 1l2 24-17 3z" fill="#6e6e6e" />
          <path d="M2 5 17 3l3 23-16 2z" fill="#a9d8ea" stroke="#8bb" strokeWidth=".5" />
        </svg>
      </TaskApp>
      <TaskApp on>
        <svg viewBox="0 0 28 28" className="w-[28px] h-[28px]">
          <rect x="6" y="1" width="22" height="26" rx="1.500" fill="#21a366" />
          <rect x="17" y="1" width="11" height="9" fill="#33c481" />
          <rect x="6" y="14" width="11" height="13" fill="#107c41" />
          <rect x="17" y="14" width="11" height="13" fill="#185c37" />
          <rect x="1" y="7" width="14" height="14" rx="1" fill="#0e6b38" />
          <path d="m5 10 6 8M11 10l-6 8" stroke="#fff" strokeWidth="1.800" />
        </svg>
      </TaskApp>
      <TaskApp on>
        <svg viewBox="0 0 26 30" className="w-[25px] h-[29px]">
          <rect x="1" y="1" width="24" height="28" rx="3" fill="#1b66c9" />
          <path d="M1 26 13 10l12 15v1a3 3 0 0 1-3 3H4a3 3 0 0 1-3-3z" fill="#5ec6f2" />
          <circle cx="18" cy="7" r="2.500" fill="#dff3ff" />
        </svg>
      </TaskApp>
      <TaskApp on>
        <svg viewBox="0 0 30 30" className="w-[30px] h-[30px]">
          <circle cx="16" cy="15" r="14" fill="#ed6c47" />
          <path d="M16 1a14 14 0 0 1 14 14H16z" fill="#ff8f6b" />
          <path d="M16 15h14a14 14 0 0 1-14 14z" fill="#d35230" />
          <rect x="1" y="8" width="14" height="14" rx="1" fill="#c43e1c" />
          <path d="M6 19v-8h2.500a2.500 2.500 0 0 1 0 5H6" fill="none" stroke="#fff" strokeWidth="1.700" />
        </svg>
      </TaskApp>

      <div className="ml-auto flex items-center h-full text-[#222]">
        <div className="flex flex-col w-[22px] h-[36px] rounded-full bg-gradient-to-b from-[#f7a11b] to-[#ee7d1a] items-center">
          <div className="w-[16px] h-[16px] -mt-[2px] ml-[8px] rounded-full bg-[#c4262e] text-white text-[11px] leading-none font-bold flex items-center justify-center">1</div>
          <div className="mt-[2px] w-[16px] h-[12px] rounded-full bg-[#cfe4f5]" />
        </div>
        <span className="ml-[5px] text-[17px] whitespace-nowrap tracking-[-0.2px]">63°F&nbsp; Mostly sunny</span>
        <svg viewBox="0 0 14 8" className="w-[14px] h-[8px] ml-[31px]" fill="none" stroke="#222"><path d="m1 7 6-6 6 6" /></svg>
        <svg viewBox="0 0 16 20" className="w-[14px] h-[18px] ml-[19px]" fill="none" stroke="#222">
          <rect x="2" y="3" width="9" height="13" rx="2" />
          <path d="M11 8h4v5h-4M6 1v2M6 16v3" />
        </svg>
        <svg viewBox="0 0 18 18" className="w-[17px] h-[17px] ml-[14px]" fill="none" stroke="#222">
          <path d="M1 7h3l4-4v12l-4-4H1zM11 6q2 3 0 6M14 4q3.500 5 0 10" />
        </svg>
        <svg viewBox="0 0 20 20" className="w-[19px] h-[19px] ml-[11px]" fill="none" stroke="#222">
          <path d="M5 1h14v11H5M1 6h6v13H1zM4 15h10M11 12v3" />
        </svg>
        <div className="ml-[3px] w-[90px] flex flex-col items-center text-[14.5px] leading-[23px] tracking-[-0.2px]">
          <span>9:22 AM</span>
          <span>5/13/2024</span>
        </div>
        <svg viewBox="0 0 20 22" className="w-[20px] h-[22px] ml-[12px]" fill="none" stroke="#222">
          <path d="M1 1h18v16h-6l-3 4-3-4H1z" />
        </svg>
        <div className="ml-[30px] mr-[29px] flex flex-col items-center">
          <svg viewBox="0 0 22 28" className="w-[22px] h-[28px]">
            <path d="M5 2h8c3 0 4 2 5 5l3 10-7 3H7C4 20 3 18 2 15L1 7c0-3 2-5 4-5z" fill="#39a0e8" />
            <path d="M14 2c3 0 4 2 5 5l3 10c0 3-2 4-4 4L13 6z" fill="#c158c8" />
            <path d="M2 10c3 0 4 2 5 5l2 6H6c-3 0-4-2-5-5z" fill="#5fd06c" />
            <rect x="9" y="18" width="13" height="9" fill="#f4c023" />
            <text x="15.500" y="25.500" textAnchor="middle" fontSize="7" fontWeight="700" fill="#222">PRE</text>
          </svg>
        </div>
      </div>
    </div>
  )
}

export default function App() {
  return (
    <div className="w-[2560px] h-[1440px] overflow-hidden flex flex-col bg-[#f0f0f0] [font-family:Lato,'Noto_Sans',sans-serif]">
      {/* title bar */}
      <div className="h-[60px] flex items-center text-[12.5px] text-[#a9a9a9] [font-family:'Noto_Sans',sans-serif] shrink-0">
        <svg viewBox="0 0 22 22" className="w-[22px] h-[22px] ml-[19px]">
          <rect x="5" y="1" width="17" height="20" rx="1.500" fill="#21a366" />
          <rect x="13" y="1" width="9" height="7" fill="#33c481" />
          <rect x="5" y="11" width="8" height="10" fill="#107c41" />
          <rect x="13" y="11" width="9" height="10" fill="#185c37" />
          <rect x="0" y="5" width="12" height="12" rx="1" fill="#0e6b38" />
          <path d="m3.500 8 5 6M8.500 8l-5 6" stroke="#fff" strokeWidth="1.500" />
        </svg>
        <span className="ml-[20px] w-[62px]">AutoSave</span>
        <div className="w-[53px] h-[24px] rounded-full border border-[#aaa] bg-white flex items-center px-[3px] gap-[6px]">
          <div className="w-[17px] h-[17px] rounded-full bg-[#b5b5b5]" />
          <span className="text-[13px]">Off</span>
        </div>
        <svg viewBox="0 0 20 20" className="w-[20px] h-[20px] ml-[17px]" fill="none" stroke="#b0b0b0" strokeWidth="1.200">
          <path d="M1 1h18v18H1zM5 1v6h10V1M5 19v-7h10v7" />
        </svg>
        <svg viewBox="0 0 20 22" className="w-[19px] h-[22px] ml-[17px]" fill="none" stroke="#b0b0b0" strokeWidth="1.200">
          <path d="M2 2v7h7M2 9c3-6 15-6 15 3 0 4-3 7-6 9" />
        </svg>
        <span className="ml-[7px]">{chevron("opacity-40")}</span>
        <svg viewBox="0 0 20 22" className="w-[19px] h-[22px] ml-[13px]" fill="none" stroke="#b0b0b0" strokeWidth="1.200">
          <path d="M18 2v7h-7M18 9C15 3 3 3 3 12c0 4 3 7 6 9" />
        </svg>
        <span className="ml-[7px]">{chevron("opacity-40")}</span>
        <svg viewBox="0 0 10 10" className="w-[10px] h-[10px] ml-[14px]" fill="none" stroke="#a9a9a9"><path d="M1 1h8M1 4l4 4 4-4" /></svg>
        <span className="ml-[34px] w-[219px] text-[14px] text-[#b8b8b8] whitespace-nowrap">Electric Vehicle Charging Stations</span>
        <span className="ml-[6px]">{chevron("opacity-40")}</span>
        <div className="ml-[459px] w-[460px] h-[40px] rounded-[4px] border border-[#d6d6d6] border-b-2 flex items-center pl-[28px] gap-[13px] text-[#b4b4b4] text-[16px]">
          <svg viewBox="0 0 20 22" className="w-[18px] h-[20px]" fill="none" stroke="#b4b4b4"><circle cx="12" cy="8" r="6.500" /><path d="M7.500 13 1.500 21" /></svg>
          Search
        </div>
        <div className="ml-auto flex items-center">
          <span className="text-[13px] text-[#b8b8b8] tracking-[-0.3px]">Jason Varner</span>
          <div className="ml-[12px] w-[30px] h-[30px] rounded-full bg-[#0078d4] text-[#dff] text-[11px] flex items-center justify-center">JV</div>
          <svg viewBox="0 0 14 20" className="w-[14px] h-[20px] ml-[37px]" fill="none" stroke="#c4c4c4"><path d="M4 13C2 11 1 9 1 7a6 6 0 0 1 12 0c0 2-1 4-3 6v3H4zM5 19h4" /></svg>
          <div className="ml-[47px] w-[13px] h-px bg-[#bdbdbd]" />
          <svg viewBox="0 0 14 16" className="w-[14px] h-[16px] ml-[43px]" fill="none" stroke="#bdbdbd"><path d="M1 4h10v11H1zM4 4V1h9v10h-2" /></svg>
          <svg viewBox="0 0 14 14" className="w-[14px] h-[14px] ml-[47px] mr-[22px]" fill="none" stroke="#bdbdbd"><path d="m1 1 12 12M13 1 1 13" /></svg>
        </div>
      </div>

      {/* menu row */}
      <div className="h-[40px] flex items-center text-[16px] text-[#333] [font-family:'Noto_Sans',sans-serif] shrink-0">
        <span className="ml-[27px] w-[57px]">File</span>
        <div className="w-[70px] h-full flex flex-col items-start">
          <span className="h-[34px] pt-[9px] leading-[20px] font-semibold">Home</span>
          <div className="w-[47px] h-[3px] bg-[#107c41] rounded-full" />
        </div>
        <span className="w-[67px]">Insert</span>
        <span className="w-[117px]">Page Layout</span>
        <span className="w-[93px]">Formulas</span>
        <span className="w-[60px]">Data</span>
        <span className="w-[77px]">Review</span>
        <span className="w-[60px]">View</span>
        <span className="w-[101px]">Developer</span>
        <span>Help</span>
        <div className="ml-auto flex items-center">
          <div className="w-[115px] h-[30px] bg-white border border-[#999] rounded-[5px] flex items-center justify-center gap-[5px] text-[15.5px]">
            <svg viewBox="0 0 14 14" className="w-[14px] h-[14px]" fill="none" stroke="#444"><path d="M1 1h12v9H6l-3 3v-3H1z" /></svg>
            Comments
          </div>
          <div className="ml-[11px] w-[89px] h-[30px] bg-[#107c41] rounded-[5px] text-white flex items-center justify-center gap-[5px] text-[15.5px]">
            <svg viewBox="0 0 14 16" className="w-[14px] h-[16px]" fill="none" stroke="#fff"><path d="M1 5h5M1 5v10h10v-5M7 9c0-4 2-6 6-6M10 .5 13 3l-3 3" /></svg>
            Share
            <svg viewBox="0 0 8 5" className="w-[8px] h-[5px]" fill="none" stroke="#fff" strokeWidth="1.200"><path d="M.7.7 4 4 7.300.7" /></svg>
          </div>
          <svg viewBox="0 0 20 24" className="w-[20px] h-[24px] ml-[17px] mr-[19px]" fill="none" stroke="#444">
            <circle cx="8" cy="8" r="4.500" />
            <path d="M1 22c0-6 3-9 7-9M6 2h13v11h-4M12 17l3 3 4-6" />
          </svg>
        </div>
      </div>

      <Ribbon />

      {/* formula bar */}
      <div className="h-[49px] shrink-0 flex items-start pt-[11px] pl-[10px] text-[16px]">
        <div className="w-[126px] h-[28px] bg-white rounded-[4px] shadow-[0_1px_1px_rgba(0,0,0,0.2)] flex items-center justify-between pl-[6px] pr-[7px] text-[#222]">A58{chevron()}</div>
        <div className="w-[27px] h-[28px] flex flex-col items-center justify-center gap-[3px]">
          <div className="w-[3px] h-[3px] bg-[#555]" /><div className="w-[3px] h-[3px] bg-[#555]" /><div className="w-[3px] h-[3px] bg-[#555]" />
        </div>
        <div className="w-[90px] h-[28px] bg-white rounded-[4px] shadow-[0_1px_1px_rgba(0,0,0,0.2)] flex items-center pl-[7px]">
          <svg viewBox="0 0 16 16" className="w-[15px] h-[15px]" fill="none" stroke="#b0b0b0"><path d="m1 1 14 14M15 1 1 15" /></svg>
          <svg viewBox="0 0 18 16" className="w-[17px] h-[15px] ml-[13px]" fill="none" stroke="#b0b0b0"><path d="m1 9 5 6L17 1" /></svg>
          <span className="ml-[11px] italic font-bold text-[#444] text-[17px] [font-family:'Liberation_Serif',serif]">fx</span>
        </div>
        <div className="ml-[7px] w-[2289px] h-[28px] bg-white rounded-[4px] shadow-[0_1px_1px_rgba(0,0,0,0.2)] flex items-center justify-between pl-[12px] pr-[6px] text-[#222] tracking-[-0.2px]">Owner IRR<svg viewBox="0 0 12 7" className="w-[10px] h-[6px]" fill="none" stroke="#444"><path d="M.7.7 6 6l5.300-5.300" /></svg></div>
      </div>

      {/* sheet */}
      <div className="h-[1050px] shrink-0 flex bg-white">
        <div className="w-[2534px] flex flex-col">
          <div className="h-[21px] shrink-0 grid grid-cols-[34px_240px_123px_repeat(10,127px)_repeat(12,72px)_1fr] bg-[#f0f0f0] border-b border-[#a5a5a5] text-[15px] text-[#444]">
            <div className="flex items-end justify-end pr-[3px] pb-[1px] border-r border-[#d4d4d4]">
              <div className="w-0 h-0 border-l-[14px] border-l-transparent border-b-[14px] border-b-[#dcdcdc]" />
            </div>
            {COLS.map((c) => (
              <div key={c} className="flex items-center justify-center border-r border-[#d4d4d4]">{c}</div>
            ))}
          </div>
          <div className="flex flex-1 min-h-0">
            <div className="w-[1667px] shrink-0 flex flex-col">
              {ROWS.map((r) => (
                <SheetRow key={r.n} r={r} />
              ))}
            </div>
            <div className="ml-[5px] flex flex-col pt-[33px] [font-family:Lato,sans-serif]">
              <div className="h-[574px] w-[862px] overflow-hidden bg-[#f2f2f2] border-l border-t-2 border-b border-black">
                <RevenueChart />
              </div>
              <div className="mt-[2px] h-[420px] w-[862px] overflow-hidden bg-[#f2f2f2] border-l border-t border-black">
                <EbitdaChart />
              </div>
            </div>
          </div>
        </div>
        <div className="flex-1 bg-[#f3f3f3] flex flex-col items-center pt-[6px] pb-[2px]">
          <svg viewBox="0 0 12 10" className="w-[12px] h-[10px]" fill="#777"><path d="M6 0l6 10H0z" /></svg>
          <div className="mt-[5px] w-[11px] h-[714px] rounded-full bg-[#757575]" />
          <div className="flex-1" />
          <svg viewBox="0 0 12 10" className="w-[12px] h-[10px] mb-[2px]" fill="#777"><path d="M6 10 0 0h12z" /></svg>
        </div>
      </div>

      <TabBar />
      <StatusBar />
      <Taskbar />
    </div>
  )
}
